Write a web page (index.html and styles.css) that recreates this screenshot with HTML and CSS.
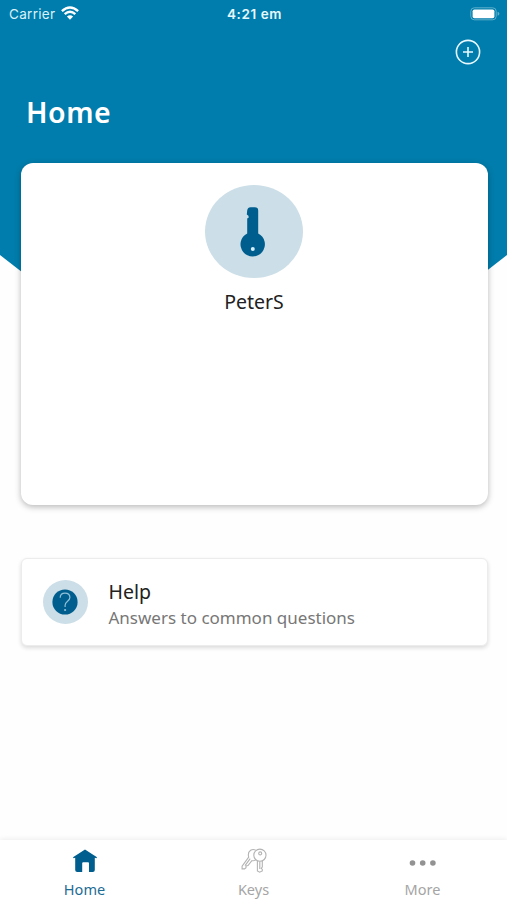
FILE: index.html
```
<!doctype html>
<html lang="en">
    <head>
        <meta charset="utf-8" />
        <title>Home</title>
        <link rel="stylesheet" href="styles.css">
    </head>
    <body>
        <div class="app">
            <header class="hero">
                <div class="status">
                    <div class="carrier">
                        <span>Carrier</span>
                        <svg class="wifi" viewBox="0 0 18 14">
                            <path d="M0.9 5.2Q9 -2.4 17.1 5.2" />
                            <path d="M3.7 8.1Q9 3.3 14.3 8.1" />
                            <path class="dot" d="M5.9 10.6Q9 7.9 12.1 10.6L9 13.8Z" />
                        </svg>
                    </div>
                    <span class="time">4:21 em</span>
                    <svg class="battery" viewBox="0 0 30 14">
                        <rect class="shell" x="0.8" y="0.8" width="25.4" height="12" rx="3.5" />
                        <rect class="charge" x="2.6" y="2.4" width="21.8" height="8.8" rx="1.8" />
                        <path class="tip" d="M27.6 4.8Q29.4 5.4 29.4 6.8T27.6 8.8Z" />
                    </svg>
                </div>
                <button class="add" aria-label="Add">
                    <svg viewBox="0 0 26 26">
                        <circle cx="13" cy="13" r="11.6" />
                        <path d="M13 8v10M8 13h10" />
                    </svg>
                </button>
                <h1>Home</h1>
            </header>

            <main>
                <section class="card profile">
                    <div class="avatar">
                        <svg viewBox="0 0 26 50">
                            <path d="M7.2 3.5Q7.8 0.3 10.5 0.3H14.8Q18.2 0.3 18.2 3.5V26.4A12.2 12.2 0 1 1 7.2 26.4V11.6L8.8 10.6L8.4 8.8L6.8 7.6Z" />
                            <circle class="hole" cx="12.8" cy="42" r="2" />
                        </svg>
                    </div>
                    <p>PeterS</p>
                </section>

                <section class="card help">
                    <div class="badge">
                        <svg viewBox="0 0 26 26">
                            <circle cx="13" cy="13" r="12.6" />
                            <path d="M8.2 8.8C8.2 5.8 10.2 4.2 13 4.2S17.9 5.9 17.9 8.6C17.9 12.1 13.1 12.5 13.1 16.2V18" />
                            <circle class="point" cx="13.1" cy="21" r="1.1" />
                        </svg>
                    </div>
                    <div class="text">
                        <h2>Help</h2>
                        <p>Answers to common questions</p>
                    </div>
                </section>
            </main>

            <nav class="tabs">
                <a class="tab active">
                    <svg class="house" viewBox="0 0 26 24">
                        <path d="M13 0.5L25 8.2L24.4 9.2L22.8 8.8V21Q22.8 23 20.8 23H17V14.2Q17 13.2 16 13.2H11.2Q10.2 13.2 10.2 14.2V23H5.2Q3.2 23 3.2 21V8.8L1.6 9.2L1 8.2Z" />
                    </svg>
                    <span>Home</span>
                </a>
                <a class="tab">
                    <svg class="keys" viewBox="0 0 26 24">
                        <circle cx="18.9" cy="6.2" r="6.1" />
                        <circle cx="19.2" cy="4.4" r="1.5" />
                        <path d="M16.4 12V22L18.6 23.2L21.3 22V20.4L20.2 19.2L21.3 18V12" />
                        <path d="M14.5 1C11.2 -0.6 7.2 1.6 7.3 6L7.7 8.2L1.1 17.2V19.9H3.6L5 18.8V17L7 16.6L10.9 11.7C12.5 12 13.8 11.5 14.5 10.8" />
                        <path d="M9.2 9.6L4 16.6M18.8 12.6V20" />
                    </svg>
                    <span>Keys</span>
                </a>
                <a class="tab">
                    <svg class="dots" viewBox="0 0 26 24">
                        <circle cx="2.5" cy="14" r="2.8" />
                        <circle cx="12.7" cy="14" r="2.8" />
                        <circle cx="22.9" cy="14" r="2.8" />
                    </svg>
                    <span>More</span>
                </a>
            </nav>
        </div>
    </body>
</html>
```
FILE: styles.css
```
* {
    box-sizing: border-box;
}

body,
h1,
h2,
p {
    margin: 0;
}

body {
    background: #fefefe;
    color: #212121;
    font-family: "Noto Sans", sans-serif;
}

svg {
    display: block;
    overflow: visible;
}

.app {
    display: flex;
    flex-direction: column;
    height: 100vh;
    overflow: hidden;
}

.hero {
    flex: none;
    height: 290px;
    display: flex;
    flex-direction: column;
    background: #007dac;
    color: #fff;
    /* cut the bottom corners, the card hides the rest */
    clip-path: polygon(0 0, 100% 0, 100% 255px, 462px 290px, 45px 290px, 0 255px);

    h1 {
        margin: 25px 0 0 26px;
        font-size: 28.5px;
        line-height: 44px;
        font-weight: 600;
        letter-spacing: 0.5px;
    }
}

.status {
    display: grid;
    grid-template-columns: 1fr auto 1fr;
    align-items: center;
    height: 27px;
    padding: 0 7px 0 9px;
    font-family: Inter, sans-serif;
    font-size: 13.5px;
    letter-spacing: 0.3px;
}

.carrier {
    display: flex;
    gap: 6px;
    color: #d9f1f9;
}

.wifi {
    width: 18px;
    height: 14px;
    fill: none;
    stroke: #fff;
    stroke-width: 2.4;

    .dot {
        fill: #fff;
        stroke: none;
    }
}

.time {
    font-weight: 600;
    letter-spacing: 0.6px;
    color: #e5f8fd;
}

.battery {
    justify-self: end;
    width: 30px;
    height: 14px;

    .shell {
        fill: none;
        stroke: #5eb1cd;
    }

    .charge {
        fill: #fff;
    }

    .tip {
        fill: #5eb1cd;
    }
}

.add {
    align-self: flex-end;
    width: 26px;
    height: 26px;
    margin: 12px 26px 0 0;
    padding: 0;
    border: 0;
    background: none;

    svg {
        width: 26px;
        height: 26px;
        fill: none;
        stroke: #e8faff;
        stroke-width: 1.6;
    }
}

main {
    flex: 1;
    position: relative;
    margin-top: -127px;
    padding: 0 19.5px 0 20.5px;
}

.card {
    background: #fff;
}

.profile {
    display: flex;
    flex-direction: column;
    align-items: center;
    height: 342px;
    padding-top: 22px;
    border-radius: 12px;
    box-shadow: 0 2px 6px rgba(0, 0, 0, 0.28);

    p {
        margin-top: 10px;
        font-size: 19.5px;
        line-height: 28px;
    }
}

.avatar {
    display: grid;
    place-items: center;
    width: 98px;
    height: 93px;
    border-radius: 50%;
    background: #ccdee7;

    svg {
        width: 26px;
        height: 50px;
        margin-right: 2px;
        fill: #005e8e;
    }

    .hole {
        fill: #d5f0fa;
    }
}

.help {
    display: flex;
    align-items: center;
    gap: 21px;
    height: 88px;
    margin-top: 53px;
    padding-left: 21px;
    border: 1px solid #ececec;
    border-radius: 6px;
    box-shadow: 0 2px 4px rgba(0, 0, 0, 0.14);

    .text {
        padding-top: 5px;
    }

    h2 {
        font-size: 19.5px;
        line-height: 26px;
        font-weight: 400;
    }

    p {
        color: #777;
        font-size: 17px;
        line-height: 26px;
    }
}

.badge {
    display: grid;
    place-items: center;
    width: 45px;
    height: 44px;
    border-radius: 50%;
    background: #ccdee7;

    svg {
        width: 26px;
        height: 26px;
        fill: #005e8e;
    }

    path {
        fill: none;
        stroke: #8fc0d8;
        stroke-width: 1.2;
    }

    .point {
        fill: #8fc0d8;
    }
}

.tabs {
    position: relative;
    flex: none;
    display: grid;
    grid-template-columns: repeat(3, 1fr);
    height: 60px;
    background: #fff;
    box-shadow: 0 -1px 5px rgba(0, 0, 0, 0.07);
}

.tab {
    display: flex;
    flex-direction: column;
    align-items: center;
    padding-top: 9px;
    color: #a5a5a5;
    font-size: 14.5px;
    line-height: 20px;

    svg {
        width: 26px;
        height: 24px;
        margin-bottom: 6px;
    }

    &.active {
        color: #1c6c95;
    }
}

.house {
    fill: #005e8e;
}

.keys {
    fill: none;
    stroke: #b3b3b3;
    stroke-width: 1.1;
}

.dots {
    fill: #929292;
}
```
